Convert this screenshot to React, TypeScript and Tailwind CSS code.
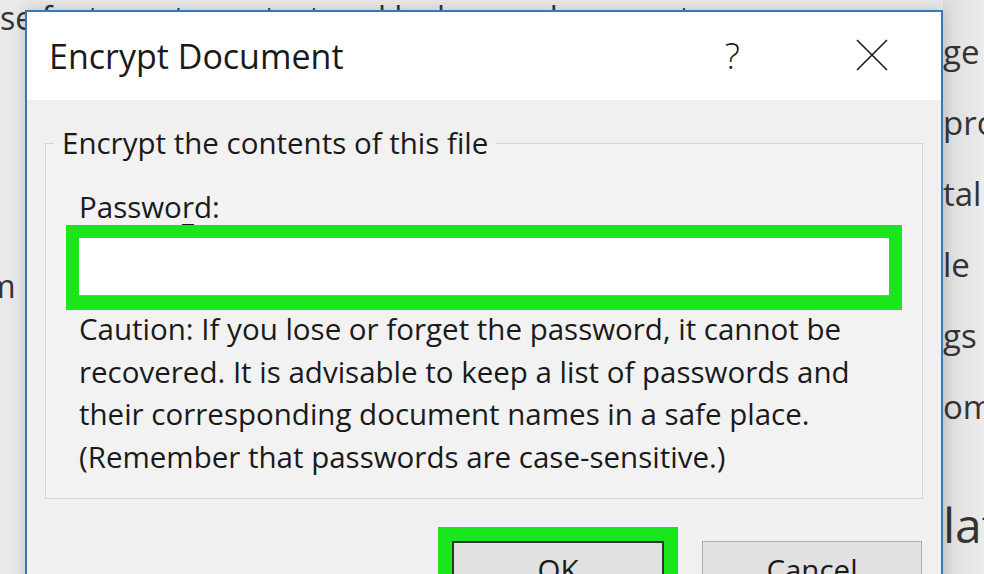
import React from "react";

const font = { fontFamily: '"Open Sans", "Noto Sans", sans-serif' };

const rightWords = ["ge", "pro", "tal", "le", "gs", "om"];

const Background: React.FC = () => {
  return (
    <div className="flex h-full w-full justify-between bg-[#e9e9e9] text-[#333]" style={font}>
      <div className="flex w-[400px] flex-col">
        <div className="-mt-[6px] whitespace-nowrap text-[32px] leading-[48px]">
          se features to protect and lock your documents
        </div>
        <div className="mt-[224px] text-[32px] leading-[40px]">
          <span className="-ml-[14px]">m</span>
        </div>
      </div>
      <div className="flex w-[41px] flex-col bg-gradient-to-r from-[#dcdcdc] to-[#ececec] pt-[16px] text-[33px] leading-[71px]">
        {rightWords.map((w) => (
          <div key={w} className="whitespace-nowrap">
            {w}
          </div>
        ))}
        <div className="mt-[58px] whitespace-nowrap text-[48px] leading-[50px]">lat</div>
      </div>
    </div>
  );
};

const CloseIcon: React.FC = () => (
  <svg width="32" height="32" viewBox="0 0 32 32" fill="none">
    <path d="M1 1 L31 31 M31 1 L1 31" stroke="#1a1a1a" strokeWidth="1.6" />
  </svg>
);

const Dialog: React.FC = () => {
  return (
    <div
      className="absolute left-[25px] top-[10px] flex h-[600px] w-[918px] flex-col border-2 border-[#3579b9] bg-[#f0f0f0] shadow-[0_0_14px_rgba(0,0,0,0.18)]"
      style={font}
    >
      {/* title bar */}
      <div className="flex h-[88px] shrink-0 items-center bg-white pl-[22px] text-[#1a1a1a]">
        <div className="text-[34px] leading-none">Encrypt Document</div>
        <div className="ml-auto mr-[116px] text-[36px] font-light leading-none">?</div>
        <div className="mr-[53px] -mt-[3px]">
          <CloseIcon />
        </div>
      </div>

      {/* body */}
      <div className="flex flex-col px-[18px] pt-[25px] text-[#1a1a1a]">
        <fieldset className="h-[374px] border border-[#d6d6d6] bg-[#f2f2f2] px-[33px] text-[29.5px]">
          <legend className="-ml-[25px] mt-[2px] px-[8px] leading-[36px]">
            Encrypt the contents of this file
          </legend>
          <div className="mt-[28px] leading-[36px]">
            Passwo<span className="underline decoration-1 underline-offset-[6px]">r</span>d:
          </div>
          <div className="-mx-[13px] border-[13px] border-b-[14px] border-[#1be51b]">
            <div className="h-[58px] border-b border-[#a0a0a0] bg-white" />
          </div>
          <p className="-mt-[2px] leading-[42.5px]">
            Caution: If you lose or forget the password, it cannot be
            <br />
            recovered. It is advisable to keep a list of passwords and
            <br />
            their corresponding document names in a safe place.
            <br />
            (Remember that passwords are case-sensitive.)
          </p>
        </fieldset>

        <div className="mt-[28px] flex justify-end gap-[24px] pr-[1px]">
          <div className="border-[14px] border-[#1be51b]">
            <div className="flex h-[60px] w-[212px] justify-center border-2 border-[#333] bg-[#e1e1e1] pt-[12px] text-[29.5px] leading-none">
              OK
            </div>
          </div>
          <div className="mt-[14px] flex h-[60px] w-[220px] justify-center border border-[#adadad] bg-[#e1e1e1] pt-[13px] text-[29.5px] leading-none">
            Cancel
          </div>
        </div>
      </div>
    </div>
  );
};

export default function App() {
  return (
    <div className="relative h-[574px] w-[984px] overflow-hidden">
      <Background />
      <Dialog />
    </div>
  );
}
